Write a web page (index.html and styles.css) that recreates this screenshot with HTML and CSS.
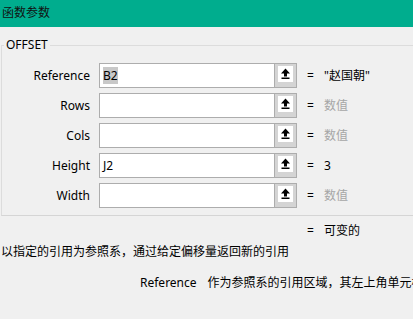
FILE: index.html
```html
<!DOCTYPE html>
<html lang="zh-CN">
<head>
    <meta charset="UTF-8">
    <title>函数参数</title>
    <link rel="stylesheet" href="styles.css">
</head>
<body>
    <div class="titlebar">函数参数</div>

    <fieldset class="group">
        <legend>OFFSET</legend>
        <div class="arg-row">
            <label class="arg-label">Reference</label>
            <div class="arg-box">
                <div class="arg-input"><span class="selected">B2</span></div>
                <div class="ref-btn"><span class="ref-face"><svg width="15" height="16" viewBox="0 0 15 16"><path d="M7.5 2.5 L3 7.5 L6 7.5 L6 10.5 L9 10.5 L9 7.5 L12 7.5 Z" fill="#000"/><rect x="3.5" y="11.5" width="8" height="1.5" fill="#000"/></svg></span></div>
            </div>
            <span class="eq">=</span>
            <span class="arg-value">"赵国朝"</span>
        </div>
        <div class="arg-row">
            <label class="arg-label">Rows</label>
            <div class="arg-box">
                <div class="arg-input"></div>
                <div class="ref-btn"><span class="ref-face"><svg width="15" height="16" viewBox="0 0 15 16"><path d="M7.5 2.5 L3 7.5 L6 7.5 L6 10.5 L9 10.5 L9 7.5 L12 7.5 Z" fill="#000"/><rect x="3.5" y="11.5" width="8" height="1.5" fill="#000"/></svg></span></div>
            </div>
            <span class="eq">=</span>
            <span class="arg-value muted">数值</span>
        </div>
        <div class="arg-row">
            <label class="arg-label">Cols</label>
            <div class="arg-box">
                <div class="arg-input"></div>
                <div class="ref-btn"><span class="ref-face"><svg width="15" height="16" viewBox="0 0 15 16"><path d="M7.5 2.5 L3 7.5 L6 7.5 L6 10.5 L9 10.5 L9 7.5 L12 7.5 Z" fill="#000"/><rect x="3.5" y="11.5" width="8" height="1.5" fill="#000"/></svg></span></div>
            </div>
            <span class="eq">=</span>
            <span class="arg-value muted">数值</span>
        </div>
        <div class="arg-row">
            <label class="arg-label">Height</label>
            <div class="arg-box">
                <div class="arg-input">J2</div>
                <div class="ref-btn"><span class="ref-face"><svg width="15" height="16" viewBox="0 0 15 16"><path d="M7.5 2.5 L3 7.5 L6 7.5 L6 10.5 L9 10.5 L9 7.5 L12 7.5 Z" fill="#000"/><rect x="3.5" y="11.5" width="8" height="1.5" fill="#000"/></svg></span></div>
            </div>
            <span class="eq">=</span>
            <span class="arg-value">3</span>
        </div>
        <div class="arg-row">
            <label class="arg-label">Width</label>
            <div class="arg-box">
                <div class="arg-input"></div>
                <div class="ref-btn"><span class="ref-face"><svg width="15" height="16" viewBox="0 0 15 16"><path d="M7.5 2.5 L3 7.5 L6 7.5 L6 10.5 L9 10.5 L9 7.5 L12 7.5 Z" fill="#000"/><rect x="3.5" y="11.5" width="8" height="1.5" fill="#000"/></svg></span></div>
            </div>
            <span class="eq">=</span>
            <span class="arg-value muted">数值</span>
        </div>
    </fieldset>

    <div class="result"><span class="eq">=</span><span>可变的</span></div>
    <div class="desc">以指定的引用为参照系，通过给定偏移量返回新的引用</div>
    <div class="help"><span class="help-name">Reference</span><span>作为参照系的引用区域，其左上角单元格将作为偏移量的起始位置</span></div>
</body>
</html>
```

FILE: styles.css
```css
body {
    margin: 0;
    background-color: #f0f0f0;
    font-family: "Noto Sans", "Noto Sans CJK SC", sans-serif;
    font-size: 12px;
    line-height: 16px;
    color: #000;
    overflow: hidden;
}
.titlebar {
    height: 27px;
    line-height: 26px;
    background-color: #00ad8e;
    padding-left: 2px;
    color: #111;
}
.group {
    margin: 10px 0 0 1px;
    padding: 10px 0 7px 0;
    width: 440px;
    border: 1px solid #dcdcdc;
    border-bottom-color: #d5d5d5;
    display: flex;
    flex-direction: column;
    gap: 5px;
}
.group legend {
    margin-left: 2px;
    padding: 0 2px;
    line-height: 16px;
}
.arg-row {
    display: flex;
    align-items: center;
    height: 25px;
}
.arg-label {
    width: 88px;
    text-align: right;
    margin-right: 9px;
}
.arg-box {
    display: flex;
    width: 198px;
    height: 25px;
    box-sizing: border-box;
    border: 1px solid #adadad;
    background-color: #fff;
}
.arg-input {
    flex: 1;
    border-right: 1px solid #adadad;
    padding-left: 3px;
    line-height: 23px;
}
.selected {
    background-color: #c8c8c8;
}
.ref-btn {
    width: 21px;
    background-color: #d4d4d4;
    padding: 2px 0 0 3px;
    box-sizing: border-box;
}
.ref-face {
    display: block;
    width: 15px;
    height: 16px;
    background-color: #fff;
}
.ref-face svg {
    display: block;
}
.eq {
    width: 17px;
    margin-left: 10px;
}
.muted {
    color: #a6a6a6;
}
.result {
    display: flex;
    margin: 7px 0 0 297px;
}
.desc {
    margin: 5px 0 0 1px;
}
.help {
    margin: 15px 0 0 140px;
    white-space: nowrap;
    overflow: hidden;
}
.help-name {
    margin-right: 11px;
}
```
